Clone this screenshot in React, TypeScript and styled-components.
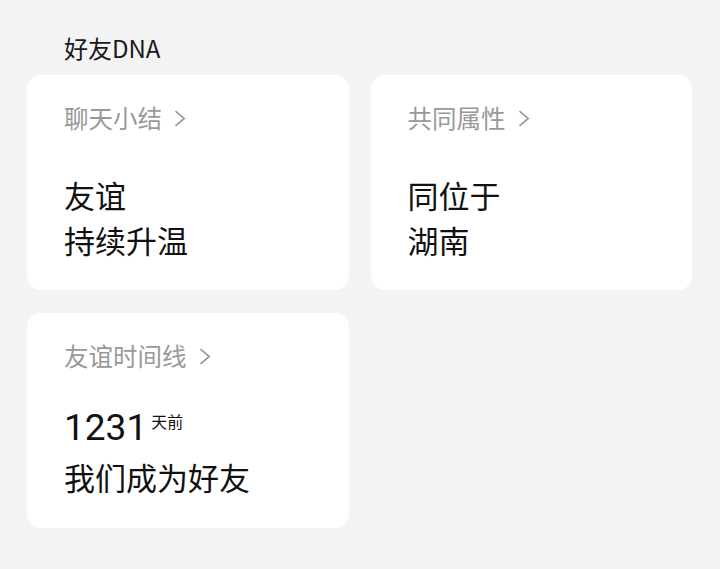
import React from 'react';
import styled, { createGlobalStyle } from 'styled-components';

const GlobalStyle = createGlobalStyle`
    html, body {
        margin: 0;
        padding: 0;
        background: #f3f3f3;
        font-family: "Noto Sans CJK SC", "Noto Sans", sans-serif;
        color: #1a1a1a;
    }
`;

type CardInfo = {
    label: string;
    lines: string[];
};

const cards: CardInfo[] = [
    { label: '聊天小结', lines: ['友谊', '持续升温'] },
    { label: '共同属性', lines: ['同位于', '湖南'] },
];

const Chevron: React.FC = () => (
    <ChevronIcon viewBox="0 0 12 17" width={12} height={17}>
        <path d="M1.5 1.2 L10.3 8.5 L1.5 15.8" fill="none" stroke="#9a9a9a" strokeWidth={1.7} />
    </ChevronIcon>
);

const App: React.FC = () => {
    return (
        <Page>
            <GlobalStyle />
            <Title>好友DNA</Title>
            <Grid>
                {cards.map((c) => (
                    <Card key={c.label}>
                        <Label>
                            {c.label}
                            <Chevron />
                        </Label>
                        <Body>
                            {c.lines.map((l) => (
                                <Line key={l}>{l}</Line>
                            ))}
                        </Body>
                    </Card>
                ))}
                <Card>
                    <Label>
                        友谊时间线
                        <Chevron />
                    </Label>
                    <CountRow>
                        <Count>1231</Count>
                        <Unit>天前</Unit>
                    </CountRow>
                    <Line $gap={8}>我们成为好友</Line>
                </Card>
            </Grid>
        </Page>
    );
};

const Page = styled.div`
    padding: 36px 28px 40px 27px;
`;

const Title = styled.div`
    font-size: 24px;
    line-height: 24px;
    padding-left: 37px;
    margin-bottom: 15px;
    color: #1a1a1a;
`;

const Grid = styled.div`
    display: grid;
    grid-template-columns: 1fr 1fr;
    gap: 23px 22px;
`;

const Card = styled.div`
    background: #ffffff;
    border-radius: 14px;
    padding: 30px 20px 26px 37px;
    height: 215px;
    box-sizing: border-box;
`;

const Label = styled.div`
    display: flex;
    align-items: center;
    font-size: 24.5px;
    line-height: 25px;
    color: #999999;
`;

const ChevronIcon = styled.svg`
    margin-left: 12px;
    margin-top: 1px;
`;

const Body = styled.div`
    margin-top: 42px;
`;

const Line = styled.div<{ $gap?: number }>`
    font-size: 31px;
    line-height: 45px;
    color: #111111;
    margin-top: ${(p) => (p.$gap ? `${p.$gap}px` : '0')};
`;

const CountRow = styled.div`
    display: flex;
    align-items: flex-start;
    margin-top: 42px;
`;

const Count = styled.div`
    font-family: Roboto, "Noto Sans", sans-serif;
    font-size: 37px;
    line-height: 36px;
    color: #111111;
`;

const Unit = styled.div`
    font-size: 16px;
    line-height: 16px;
    margin-top: 3px;
    margin-left: 4px;
    color: #111111;
`;

export default App;
